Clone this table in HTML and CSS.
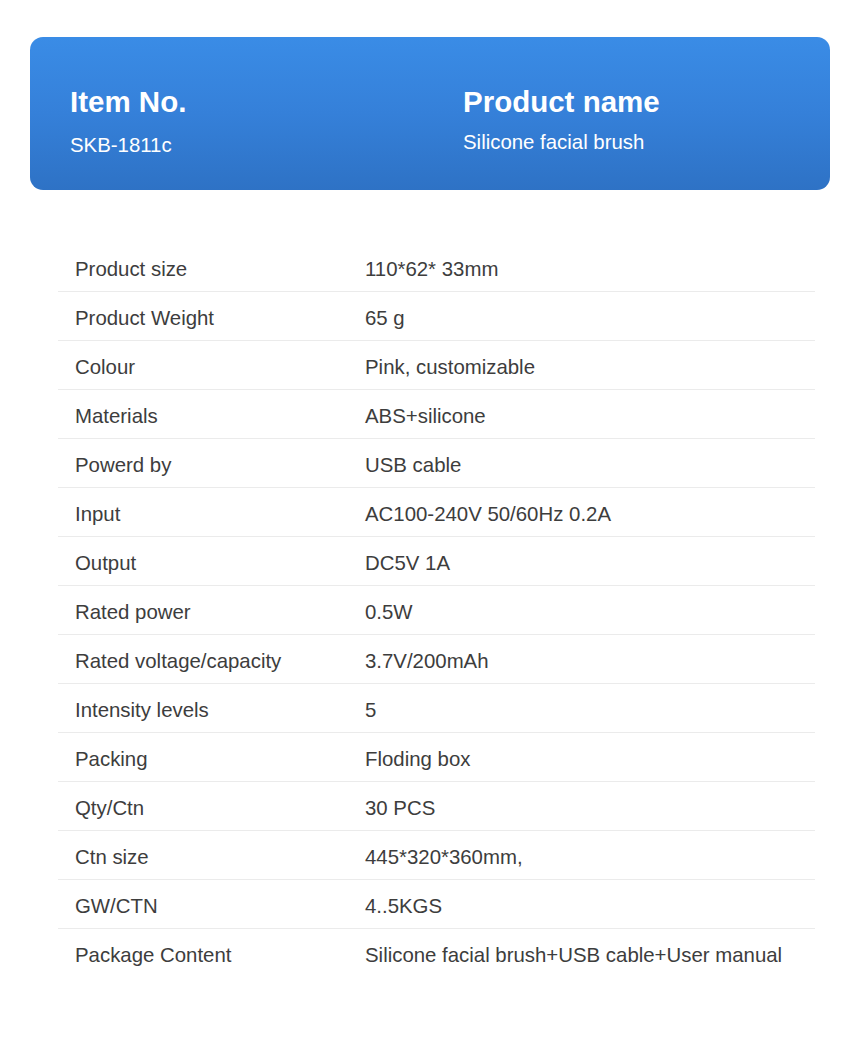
FILE: index.html
```html
<!DOCTYPE html>
<html>
<head>
<meta charset="utf-8">
<link rel="stylesheet" href="styles.css">
</head>
<body>
<div class="header">
  <div class="col">
    <div class="h">Item No.</div>
    <div class="sub">SKB-1811c</div>
  </div>
  <div class="col">
    <div class="h">Product name</div>
    <div class="sub sub2">Silicone facial brush</div>
  </div>
</div>
<div class="specs">
  <div class="row"><div class="k">Product size</div><div class="v">110*62* 33mm</div></div>
  <div class="row"><div class="k">Product Weight</div><div class="v">65 g</div></div>
  <div class="row"><div class="k">Colour</div><div class="v">Pink, customizable</div></div>
  <div class="row"><div class="k">Materials</div><div class="v">ABS+silicone</div></div>
  <div class="row"><div class="k">Powerd by</div><div class="v">USB cable</div></div>
  <div class="row"><div class="k">Input</div><div class="v">AC100-240V 50/60Hz 0.2A</div></div>
  <div class="row"><div class="k">Output</div><div class="v">DC5V 1A</div></div>
  <div class="row"><div class="k">Rated power</div><div class="v">0.5W</div></div>
  <div class="row"><div class="k">Rated voltage/capacity</div><div class="v">3.7V/200mAh</div></div>
  <div class="row"><div class="k">Intensity levels</div><div class="v">5</div></div>
  <div class="row"><div class="k">Packing</div><div class="v">Floding box</div></div>
  <div class="row"><div class="k">Qty/Ctn</div><div class="v">30 PCS</div></div>
  <div class="row"><div class="k">Ctn size</div><div class="v">445*320*360mm,</div></div>
  <div class="row"><div class="k">GW/CTN</div><div class="v">4..5KGS</div></div>
  <div class="row last"><div class="k">Package Content</div><div class="v">Silicone facial brush+USB cable+User manual</div></div>
</div>
</body>
</html>
```
FILE: styles.css
```css
html, body {
  margin: 0;
  padding: 0;
  background: #fff;
  font-family: "Liberation Sans", Arial, sans-serif;
}
.header {
  margin: 37px 20px 0 30px;
  height: 153px;
  box-sizing: border-box;
  border-radius: 13px;
  background: linear-gradient(180deg, #3a8ce6 0%, #3580d9 50%, #2e72c5 100%);
  display: grid;
  grid-template-columns: 393px 1fr;
  padding: 48px 0 0 40px;
  color: #fff;
}
.h {
  font-size: 29.5px;
  font-weight: 700;
  line-height: 34px;
  letter-spacing: 0;
}
.sub {
  font-size: 20.4px;
  line-height: 24px;
  margin-top: 14px;
}
.sub2 {
  margin-top: 11px;
}
.specs {
  margin: 53px 35px 0 58px;
}
.row {
  display: grid;
  grid-template-columns: 307px 1fr;
  height: 44px;
  padding-top: 4px;
  align-items: center;
  border-bottom: 1px solid #ebebeb;
  font-size: 20.4px;
  color: #3d3d3d;
}
.row.last {
  border-bottom: none;
}
.k {
  padding-left: 17px;
}
```
